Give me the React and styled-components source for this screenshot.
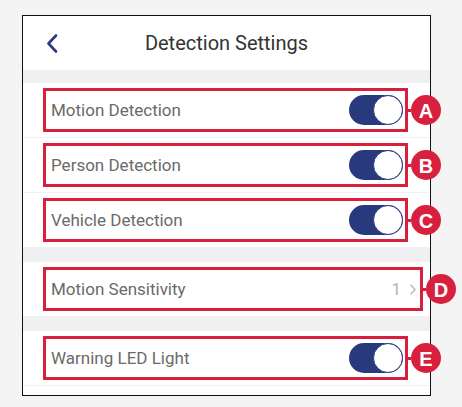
import styled, { createGlobalStyle } from "styled-components";

const GlobalStyle = createGlobalStyle`
  * {
    box-sizing: border-box;
  }
  body {
    margin: 0;
    background: #f4f4f4;
    font-family: Roboto, "Liberation Sans", sans-serif;
  }
`;

const Frame = styled.div`
  width: 409px;
  margin: 15px 0 0 22px;
  border: 1px solid #111;
  background: #fff;
  padding-bottom: 9px;
`;

const Header = styled.div`
  height: 54px;
  display: grid;
  grid-template-columns: 1fr auto 1fr;
  align-items: center;
  padding: 0 23px;
`;

const BackButton = styled.div`
  display: flex;
  align-items: center;
`;

const Title = styled.h1`
  margin: 0;
  font-size: 20px;
  font-weight: 400;
  color: #333;
`;

const Band = styled.div`
  height: ${(p) => p.$h}px;
  background: #f0f0f3;
`;

const Row = styled.div`
  height: 55px;
  border-bottom: 1px solid #f1f1f3;
  display: flex;
  align-items: center;
  padding: 0 ${(p) => (p.$wide ? 7 : 22)}px 0 20px;
`;

const Marked = styled.div`
  position: relative;
  flex: 1;
  height: 44px;
  border: 3.5px solid #d8203e;
  display: flex;
  align-items: center;
  justify-content: space-between;
  padding: 0 ${(p) => (p.$wide ? 4 : 2)}px 0 5px;
`;

const Label = styled.span`
  font-size: 17px;
  color: #6a6a6a;
`;

const Track = styled.div`
  width: 54px;
  height: 30px;
  border-radius: 15px;
  background: #283a7d;
  display: flex;
  justify-content: flex-end;
`;

const Thumb = styled.div`
  width: 30px;
  height: 30px;
  border-radius: 50%;
  background: #fff;
  border: 1.5px solid #283a7d;
`;

const Value = styled.div`
  display: flex;
  align-items: center;
  gap: 9px;
  font-size: 17px;
  color: #b3b3b3;
`;

const Callout = styled.div`
  position: absolute;
  left: 100%;
  top: 50%;
  transform: translateY(-50%);
  display: flex;
  align-items: center;
  margin-left: 2px;
`;

const Connector = styled.div`
  width: 4px;
  height: 3px;
  background: #d8203e;
`;

const Badge = styled.div`
  width: 30px;
  height: 30px;
  border-radius: 50%;
  background: #d8203e;
  color: #fff;
  display: flex;
  align-items: center;
  justify-content: center;
  font-family: "Liberation Sans", Arial, sans-serif;
  font-weight: 700;
  font-size: 20px;
  line-height: 1;
  padding-top: 1px;
`;

function Toggle() {
  return (
    <Track>
      <Thumb />
    </Track>
  );
}

function Mark({ letter }) {
  return (
    <Callout>
      <Connector />
      <Badge>{letter}</Badge>
    </Callout>
  );
}

function SwitchRow({ label, letter }) {
  return (
    <Row>
      <Marked>
        <Label>{label}</Label>
        <Toggle />
        <Mark letter={letter} />
      </Marked>
    </Row>
  );
}

export default function App() {
  return (
    <>
      <GlobalStyle />
      <Frame>
        <Header>
          <BackButton>
            <svg width="12" height="19" viewBox="0 0 12 19">
              <path
                d="M10 1.5 L2.5 9.5 L10 17.5"
                fill="none"
                stroke="#2d3a80"
                strokeWidth="2.6"
                strokeLinecap="round"
                strokeLinejoin="round"
              />
            </svg>
          </BackButton>
          <Title>Detection Settings</Title>
          <div />
        </Header>
        <Band $h={13} />
        <SwitchRow label="Motion Detection" letter="A" />
        <SwitchRow label="Person Detection" letter="B" />
        <SwitchRow label="Vehicle Detection" letter="C" />
        <Band $h={14} />
        <Row $wide>
          <Marked $wide>
            <Label>Motion Sensitivity</Label>
            <Value>
              1
              <svg width="6" height="11" viewBox="0 0 6 11">
                <path
                  d="M1 1 L5 5.5 L1 10"
                  fill="none"
                  stroke="#bdbdbd"
                  strokeWidth="1.6"
                  strokeLinecap="round"
                  strokeLinejoin="round"
                />
              </svg>
            </Value>
            <Mark letter="D" />
          </Marked>
        </Row>
        <Band $h={14} />
        <SwitchRow label="Warning LED Light" letter="E" />
      </Frame>
    </>
  );
}
